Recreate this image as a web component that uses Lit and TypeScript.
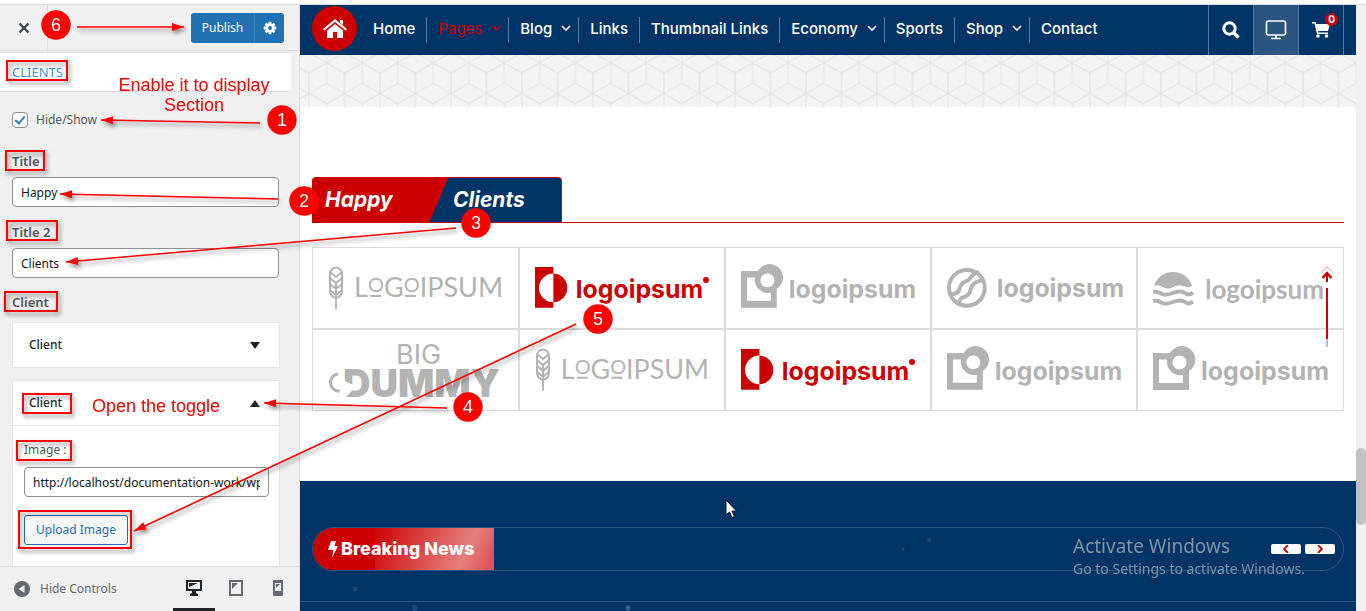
import { LitElement, html, svg, css, nothing } from "lit";
import { customElement } from "lit/decorators.js";
import { classMap } from "lit/directives/class-map.js";

interface NavItem {
  label: string;
  menu?: boolean;
  current?: boolean;
}

const NAV: NavItem[] = [
  { label: "Home" },
  { label: "Pages", menu: true, current: true },
  { label: "Blog", menu: true },
  { label: "Links" },
  { label: "Thumbnail Links" },
  { label: "Economy", menu: true },
  { label: "Sports" },
  { label: "Shop", menu: true },
  { label: "Contact" },
];

const LOGOS = [
  "wheat", "half", "square", "planet", "sunset",
  "dummy", "wheat", "half", "square", "square",
];

const chevron = html`<svg class="chevron" viewBox="0 0 10 7" width="10" height="7" aria-hidden="true">
  <path d="M1 1l4 4 4-4" fill="none" stroke="currentColor" stroke-width="1.6" /></svg>`;

@customElement("client-logo")
class ClientLogo extends LitElement {
  static properties = { kind: { type: String } };
  declare kind: string;

  static styles = css`
    :host { display: block; color: #b3b3b3; }
    svg { display: block; width: 100%; height: auto; overflow: visible; }
    .thin { font: 400 27px "Lato", sans-serif; }
    .ring { font-size: 20px; }
    .grotesk { font: 700 25px "Inter", sans-serif; }
    .soft { font: 700 26px "Lato", sans-serif; }
    .big { font: 400 27px "Inter", sans-serif; }
    .heavy { font: 900 38px "Inter", sans-serif; }
    .red { color: #c00; }
  `;

  private art() {
    switch (this.kind) {
      case "wheat":
        return svg`
          <g fill="none" stroke="currentColor" stroke-width="2">
            <path d="M8 47V36M2 12a6 6.500 0 0 1 12 0v17q0 6-6 7q-6-1-6-7z" />
            <path d="M2 10l6 5 6-5M2 16l6 5 6-5M2 22l6 5 6-5M2 28l6 5 6-5M8 20v16" />
          </g>
          <text class="thin" x="26" y="35" fill="currentColor">L<tspan class="ring" dy="-5">O</tspan><tspan dy="5">G</tspan><tspan class="ring" dy="-5">O</tspan><tspan dy="5">IPSUM</tspan></text>
          <path d="M42 34h11M77 34h11" stroke="currentColor" stroke-width="2" />`;
      case "half":
        return svg`
          <path fill="currentColor" d="M0 5h18.500v6.500a14.500 14.500 0 0 0 0 29V46H0z" />
          <path fill="currentColor" d="M18.500 11.500a14 14.500 0 0 1 0 29z" />
          <text class="grotesk" x="41" y="36" fill="currentColor">logoipsum</text>
          <circle cx="172" cy="18" r="3" fill="currentColor" />`;
      case "square":
        return svg`
          <path fill="currentColor" fill-rule="evenodd"
            d="M0 9h17a13.500 13.500 0 1 1 19 18v19H0zM6 15.500v23.500h24V31a13.500 13.500 0 0 1-16-15.500z" />
          <circle cx="26.500" cy="18.500" r="7" fill="#fff" />
          <text class="grotesk" x="48" y="36" fill="currentColor">logoipsum</text>`;
      case "planet":
        return svg`
          <g fill="none" stroke="currentColor" stroke-width="4">
            <circle cx="20" cy="26" r="18" />
            <path d="M4 32c6 1 8-2 9-6s3-6 7-7 4-8 12-9" />
            <path d="M12 43c0-6 2-7 6-8s5-4 6-8 3-7 13-9" />
          </g>
          <text class="grotesk" x="50" y="35" fill="currentColor">logoipsum</text>`;
      case "sunset":
        return svg`
          <path fill="currentColor" d="M1 24a19.500 18 0 0 1 38 0q-4 2-9 0t-10 1-10 0-9-1z" />
          <path fill="none" stroke="currentColor" stroke-width="4"
            d="M0 30q4-1 8 1.500t12-.5 12 0 8-.500M0 39q4-1 8 1.500t12-.5 12 0 8-.500" />
          <text class="soft" x="52" y="37" fill="currentColor">logoipsum</text>`;
      default:
        return svg`
          <text class="big" x="68" y="20" fill="currentColor">BIG</text>
          <text class="heavy" x="15" y="53" fill="currentColor">DUMMY</text>
          <path d="M10 30a8.500 8.500 0 1 0 2 17" fill="none" stroke="currentColor" stroke-width="3" />
          <path d="M13 34l7 5 8 2-6 8-5 5-3-8z" fill="#fff" />`;
    }
  }

  render() {
    return html`<svg class=${this.kind === "half" ? "red" : "gray"} viewBox="0 0 176 54"
      role="img" aria-label="Client logo">${this.art()}</svg>`;
  }
}

@customElement("customizer-panel")
class CustomizerPanel extends LitElement {
  static styles = css`
    :host {
      display: flex; flex-direction: column; box-sizing: border-box; width: 300px; flex: none;
      background: #f0f0f1; border-right: 1px solid #dcdcde; color: #50575e;
      font: 12px/18px "Noto Sans", sans-serif;
    }
    * { box-sizing: border-box; }
    button { font: inherit; cursor: pointer; padding: 0; border: 0; background: none; color: inherit; }
    .head { display: flex; align-items: center; height: 46px; border-bottom: 1px solid #dcdcde; padding-right: 15px; flex: none; }
    .close { width: 48px; align-self: stretch; border-right: 1px solid #dcdcde; color: #3c434a; display: grid; place-items: center; }
    .save { display: flex; margin-left: auto; height: 30px; }
    .save button { background: #2271b1; color: #fff; display: grid; place-items: center; }
    .save .publish { width: 63px; border-radius: 3px 0 0 3px; }
    .save .gear { width: 30px; border-radius: 0 3px 3px 0; border-left: 1px solid #3b82bb; }
    .pane { flex: 1; min-height: 0; overflow: hidden; padding-right: 8px; margin-top: 1px; }
    h2 { margin: 0; background: #fff; border: solid #dcdcde; border-width: 1px 0; height: 40px; padding: 0 12px; font: 400 13px/38px "Noto Sans", sans-serif; color: #4292d4; }
    .fields { padding: 20px 12px 0; display: flex; flex-direction: column; }
    .check { display: flex; align-items: center; gap: 8px; height: 16px; }
    .check input { appearance: none; width: 16px; height: 16px; margin: 0; border: 1px solid #8c8f94; border-radius: 4px; background: #fff; display: grid; place-items: center; }
    .check input:checked::before { content: ""; width: 4px; height: 8px; border: solid #3582c4; border-width: 0 2px 2px 0; rotate: 40deg; translate: 0 -1px; }
    .label { font-weight: 600; font-size: 13px; line-height: 20px; }
    .field { display: grid; gap: 6px; margin-top: 23px; }
    .field + .field { margin-top: 15px; }
    .text { width: 100%; height: 30px; border: 1px solid #8c8f94; border-radius: 4px; padding: 0 8px; background: #fff; font: 12px/18px "Noto Sans", sans-serif; color: #101517; }
    .group { margin-top: 14px; display: grid; gap: 10px; margin-right: -1px; }
    .card { background: #fff; border: 1px solid #e5e5e5; }
    .toggle { display: flex; align-items: center; justify-content: space-between; width: 100%; height: 44px; padding: 0 19px 0 16px; color: #1d2327; font-weight: 500; }
    .cards { display: grid; gap: 12px; }
    .open { border-top: 1px solid #e5e5e5; padding: 15px 10px 40px 11px; display: grid; justify-items: start; }
    .open .text { margin: 8px 0 18px; }
    .upload { border: 1px solid #2271b1; border-radius: 3px; background: #f6f7f7; color: #2271b1; height: 30px; padding: 0 11px; }
    .foot { flex: none; height: 45px; border-top: 1px solid #dcdcde; display: flex; align-items: stretch; padding-left: 14px; color: #646970; background: #f0f0f1; }
    .hide { display: flex; align-items: center; gap: 10px; }
    .devices { margin-left: auto; display: flex; }
    .devices button { width: 42px; display: grid; place-items: center; border-bottom: 3px solid transparent; }
    .devices .on { border-color: #1d2327; color: #1d2327; }
  `;

  private textField(id: string, label: string, value: string) {
    return html`<div class="field"><label class="label" for=${id}>${label}</label>
      <input class="text" id=${id} type="text" .value=${value} /></div>`;
  }

  private arrow(up: boolean) {
    return html`<svg width="10" height="7" viewBox="0 0 10 7" aria-hidden="true">
      <path d=${up ? "M0 7h10L5 0z" : "M0 0h10L5 7z"} fill="currentColor" /></svg>`;
  }

  render() {
    return html`
      <div class="head">
        <button class="close" aria-label="Close"><svg width="12" height="12" viewBox="0 0 12 12">
          <path d="M1.500 1.500l9 9M10.500 1.500l-9 9" stroke="currentColor" stroke-width="2.200" /></svg></button>
        <div class="save">
          <button class="publish">Publish</button>
          <button class="gear" aria-label="Publish settings"><svg width="14" height="14" viewBox="-7 -7 14 14">
            <g fill="#fff">${[0, 45, 90, 135].map((a) => svg`<rect x="-1.400" y="-6.300" width="2.800" height="12.600" rx=".6" transform="rotate(${a})" />`)}
            <circle r="4.600" /></g><circle r="2" fill="#2271b1" /></svg></button>
        </div>
      </div>
      <div class="pane">
        <h2>CLIENTS</h2>
        <div class="fields">
          <label class="check"><input type="checkbox" checked />Hide/Show</label>
          ${this.textField("t1", "Title", "Happy")}
          ${this.textField("t2", "Title 2", "Clients")}
          <div class="group">
            <span class="label">Client</span>
            <div class="cards">
              <div class="card"><button class="toggle" aria-expanded="false">Client ${this.arrow(false)}</button></div>
              <div class="card">
                <button class="toggle" aria-expanded="true">Client ${this.arrow(true)}</button>
                <div class="open">
                  <label for="img">Image :</label>
                  <input class="text" id="img" type="text" .value=${"http://localhost/documentation-work/wp-content/uploads/logo.png"} />
                  <button class="upload">Upload Image</button>
                </div>
              </div>
            </div>
          </div>
        </div>
      </div>
      <div class="foot">
        <button class="hide"><svg width="16" height="16" viewBox="0 0 16 16"><circle cx="8" cy="8" r="8" fill="currentColor" />
          <path d="M10.500 4v8L4.500 8z" fill="#f0f0f1" /></svg>Hide Controls</button>
        <div class="devices">
          <button class="on" aria-label="Desktop"><svg width="16" height="16" viewBox="0 0 16 16">
            <path fill="currentColor" fill-rule="evenodd" d="M0 0h16v11h-6v2l2 1v2H4v-2l2-1v-2H0zM2 2v7h12V2z" /><path d="M3 3h9L3 7z" fill="currentColor" /></svg></button>
          <button aria-label="Tablet"><svg width="14" height="16" viewBox="0 0 14 16">
            <path fill="currentColor" fill-rule="evenodd" d="M0 0h14v16H0zM2 2v12h10V2z" /><path d="M3 3h6L3 9z" fill="currentColor" /></svg></button>
          <button aria-label="Mobile"><svg width="10" height="16" viewBox="0 0 10 16">
            <path fill="currentColor" fill-rule="evenodd" d="M1 0h8q1 0 1 1v14q0 1-1 1H1q-1 0-1-1V1q0-1 1-1zM2 3v8h6V3z" /><path d="M3 4h4L3 8z" fill="currentColor" /></svg></button>
        </div>
      </div>`;
  }
}

@customElement("site-preview")
class SitePreview extends LitElement {
  static styles = css`
    :host { display: flex; flex-direction: column; flex: 1; min-width: 0; background: #fff; font-family: "Inter", sans-serif; }
    * { box-sizing: border-box; }
    button { border: 0; padding: 0; background: none; color: inherit; cursor: pointer; }
    .bar { flex: none; height: 50px; background: #003466; display: flex; align-items: center; padding: 0 12px; color: #fff; }
    .home { width: 45px; height: 45px; border-radius: 50%; background: #c00; display: grid; place-items: center; color: #fff; margin: 0 5px 3px 0; flex: none; }
    nav { display: flex; }
    .item { display: flex; align-items: center; gap: 9px; height: 26px; padding: 0 11px 3px; border-left: 1px solid #54779a; color: #fff; font-size: 15px; font-weight: 500; text-decoration: none; white-space: nowrap; }
    .item:first-child { border-left: 0; }
    .item.menu { padding-right: 7px; }
    .item.current { color: #c00; font-weight: 400; }
    .tools { margin-left: auto; display: flex; align-self: stretch; border-right: 1px solid #54779a; }
    .tools button { width: 45px; border-left: 1px solid #54779a; display: grid; place-items: center; position: relative; }
    .tools .lit { background: #295580; }
    .count { position: absolute; top: 8px; right: 5px; width: 13px; height: 13px; border-radius: 50%; background: #c00; color: #fff; font: 700 10px/13px "Inter", sans-serif; text-align: center; }
    .cubes { flex: none; display: block; width: 100%; height: 52px; background: #f4f4f4; }
    .clients { padding: 70px 12px; }
    .title { display: flex; border-bottom: 1px solid #c00; }
    h2 { margin: 0; display: grid; grid-template-columns: 128px 120px; height: 45px; border-radius: 4px 4px 0 0; border: solid #c00; border-width: 1px 1px 0; overflow: hidden; background: linear-gradient(113deg, #c00 124px, #003466 125px); color: #fff; font: italic 700 21px/44px "Inter", sans-serif; }
    h2 span { padding-left: 12px; }
    .grid { margin-top: 24px; display: grid; grid-template-columns: repeat(5, 1fr); border: 1px solid #dcdcdc; }
    .cell { height: 81px; padding: 14px 14px 12px 15px; border: 1px solid #dcdcdc; }
    .cell:nth-child(5n) { border-right: 0; }
    .cell:nth-child(5n + 1) { border-left: 0; }
    .cell:nth-child(-n + 5) { border-top: 0; }
    .cell:nth-child(n + 6) { border-bottom: 0; }
    .news { flex: 1; position: relative; background: #003466; padding: 46px 0 0; overflow: hidden; }
    .dots { position: absolute; inset: 0; width: 100%; height: 100%; }
    .ticker { margin: 0 12px 30px; height: 44px; border: 1px solid #2b547f; border-radius: 22px; display: flex; align-items: center; justify-content: space-between; overflow: hidden; padding-right: 8px; }
    .tag { margin: 0; width: 181px; height: 42px; padding-left: 15px; display: flex; align-items: center; gap: 3px; color: #fff; font: 800 18px/42px "Inter", sans-serif; white-space: nowrap; background: linear-gradient(to right, #c00 62px, transparent 62px), linear-gradient(115deg, #c00 30%, #e68080 82%, #de5555 96%); }
    .arrows { display: flex; gap: 4px; position: relative; }
    .arrows button { width: 30px; height: 10px; border-radius: 2px; background: #fff; display: grid; place-items: center; }
    .rule { border-top: 1px solid #2b547f; }
  `;

  render() {
    const hexes = [[0, 0], [35.5, 0], [17.75, 30.75], [0, 61.5], [35.5, 61.5]];
    return html`
      <header class="bar">
        <a class="home" href="#" aria-label="Home page"><svg width="24" height="20" viewBox="0 0 24 20">
          <path fill="#fff" d="M12 0l12 10-1.500 1.600L12 3 1.500 11.600 0 10zM17 1h3v5l-3-2.500z" /><path fill="#fff" d="M12 5l8 6.500V19h-6v-6h-4v6H4v-7.500z" /></svg></a>
        <nav>${NAV.map((n) => html`<a href="#" class=${classMap({ item: true, menu: !!n.menu, current: !!n.current })}>${n.label}${n.menu ? chevron : nothing}</a>`)}</nav>
        <div class="tools">
          <button aria-label="Search"><svg width="18" height="18" viewBox="0 0 18 18"><circle cx="7.500" cy="7.500" r="5.700" fill="none" stroke="#fff" stroke-width="3" />
            <path d="M11.500 11.500l5 5" stroke="#fff" stroke-width="3.400" /></svg></button>
          <button class="lit" aria-label="Display"><svg width="22" height="20" viewBox="0 0 22 20" fill="none" stroke="#fff" stroke-width="1.600">
            <rect x="1.500" y="1" width="19" height="14" rx="2" /><path d="M11 15v3M6 18.500h10" /></svg></button>
          <button aria-label="Cart"><svg width="18" height="16" viewBox="0 0 18 16"><path fill="#fff" d="M0 0h3.500l.5 2h14l-2 7H6l.4 1.500H16V12H5L2.500 1.600H0z" />
            <circle cx="6" cy="14" r="1.800" fill="#fff" /><circle cx="14.500" cy="14" r="1.800" fill="#fff" /></svg><span class="count">0</span></button>
        </div>
      </header>
      <svg class="cubes" aria-hidden="true">
        <defs><pattern id="cube" x="26.700" y="28.300" width="35.500" height="61.500" patternUnits="userSpaceOnUse">
          ${hexes.map(([x, y]) => svg`<path transform="translate(${x} ${y})" fill="none" stroke="#e0e3e8" stroke-width="1"
            d="M0-20.500L17.750-10.250V10.250L0 20.500-17.750 10.250V-10.250zM0 0V-20.500M0 0L-17.750 10.250M0 0L17.750 10.250" />`)}</pattern></defs>
        <rect width="100%" height="100%" fill="url(#cube)" />
      </svg>
      <section class="clients">
        <div class="title"><h2><span>Happy</span><span>Clients</span></h2></div>
        <div class="grid">${LOGOS.map((k) => html`<div class="cell"><client-logo .kind=${k}></client-logo></div>`)}</div>
      </section>
      <section class="news">
        <svg class="dots" aria-hidden="true"><g fill="#1d4b78"><circle cx="55" cy="108" r="2.500" /><circle cx="115" cy="127" r="3" /><circle cx="328" cy="127" r="2.500" fill="#34608c" />
          <circle cx="603" cy="68" r="1.500" /><circle cx="629" cy="59" r="2" /></g></svg>
        <div class="ticker">
          <h3 class="tag"><svg width="10" height="17" viewBox="0 0 10 17"><path d="M3 0h5L6.500 5H10L4 17l1.300-8H0z" fill="#fff" /></svg>Breaking News</h3>
          <div class="arrows">
            <button aria-label="Previous"><svg width="6" height="8" viewBox="0 0 6 8"><path d="M5 0L1 4l4 4" fill="none" stroke="#c00" stroke-width="1.800" /></svg></button>
            <button aria-label="Next"><svg width="6" height="8" viewBox="0 0 6 8"><path d="M1 0l4 4-4 4" fill="none" stroke="#c00" stroke-width="1.800" /></svg></button>
          </div>
        </div>
        <div class="rule"></div>
      </section>`;
  }
}

const BOXES = [
  [7, 61, 60, 19], [6, 151, 38, 19], [7, 221, 50, 19], [5, 292, 52, 19],
  [23, 394, 48, 19], [17, 441, 54, 19], [19, 511, 112, 37],
];
// from x, from y, tip x, tip y
const ARROWS = [
  [77, 27, 184, 27], [260, 123, 101, 120], [278, 199, 60, 194],
  [456, 228, 66, 262], [447, 408, 264, 403], [576, 324, 134, 531],
];
const BADGES = [
  [282, 120, "1"], [304, 201, "2"], [476, 223, "3"],
  [468, 407, "4"], [598, 319, "5"], [56, 25, "6"],
] as const;

@customElement("guide-marks")
class GuideMarks extends LitElement {
  static styles = css`
    :host { display: block; position: absolute; inset: 0; pointer-events: none; overflow: hidden; }
    svg { display: block; width: 100%; height: 100%; }
    .ink { filter: drop-shadow(2px 3px 2px rgb(0 0 0 / 45%)); }
    .note { font: 18px "Liberation Sans", sans-serif; fill: #f00; }
    .num { font: 18px "Liberation Sans", sans-serif; fill: #fff; }
    .os { font: 19px "Noto Sans", sans-serif; fill: #8093a6; }
    .os-small { font: 14px "Noto Sans", sans-serif; fill: #8093a6; }
  `;

  private arrow([x1, y1, x2, y2]: number[]) {
    const a = (Math.atan2(y2 - y1, x2 - x1) * 180) / Math.PI;
    return svg`<path d="M${x1} ${y1}L${x2} ${y2}" stroke="#f00" stroke-width="1.500" />
      <path d="M0 0L-12 -4V4z" fill="#f00" transform="translate(${x2} ${y2}) rotate(${a})" />`;
  }

  render() {
    return html`<svg>
      <g class="ink">
        ${BOXES.map(([x, y, w, h]) => svg`<rect x=${x} y=${y} width=${w} height=${h} fill="none" stroke="#f00" stroke-width="2" />`)}
        ${ARROWS.map((a) => this.arrow(a))}
      </g>
      ${BADGES.map(([x, y, n]) => svg`<circle cx=${x} cy=${y} r="14.700" fill="#f00" /><text class="num" x=${x} y=${y + 6} text-anchor="middle">${n}</text>`)}
      <text class="note" x="194" y="91" text-anchor="middle">Enable it to display</text>
      <text class="note" x="194" y="111" text-anchor="middle">Section</text>
      <text class="note" x="92" y="412">Open the toggle</text>
      <path d="M1327 272v10" stroke="#c00" stroke-width="2" />
      <path d="M1322.500 278l4.500-5 4.500 5" fill="none" stroke="#c00" stroke-width="2.400" />
      <path d="M1321.500 271.500l5.500-4.500 5.500 4.500" fill="none" stroke="#e99" />
      <path d="M1327 288v51" stroke="#c00" stroke-width="2" /><path d="M1327 339v8" stroke="#bbb" stroke-width="2" />
      <text class="os" x="1073" y="553">Activate Windows</text>
      <text class="os-small" x="1073" y="574">Go to Settings to activate Windows.</text>
      <path d="M726 500v15l3.500-3 2.500 5.500 2.500-1-2.500-5.500h4.500z" fill="#fff" stroke="#111" />
    </svg>`;
  }
}

@customElement("app-root")
class AppRoot extends LitElement {
  static styles = css`
    :host { display: flex; flex-direction: column; position: relative; box-sizing: border-box; height: 100vh; overflow: hidden; background: #fff; padding-top: 4px; }
    .work { flex: 1; min-height: 0; display: flex; border-top: 1px solid #dcdcde; }
    .scroll { flex: none; width: 10px; background: #f1f1f1; display: grid; grid-template-rows: 443fr 77fr 86fr; }
    .thumb { grid-row: 2; background: #c1c1c1; border-radius: 5px; }
  `;

  render() {
    return html`
      <div class="work">
        <customizer-panel></customizer-panel>
        <site-preview></site-preview>
        <div class="scroll"><div class="thumb"></div></div>
      </div>
      <guide-marks></guide-marks>`;
  }
}
